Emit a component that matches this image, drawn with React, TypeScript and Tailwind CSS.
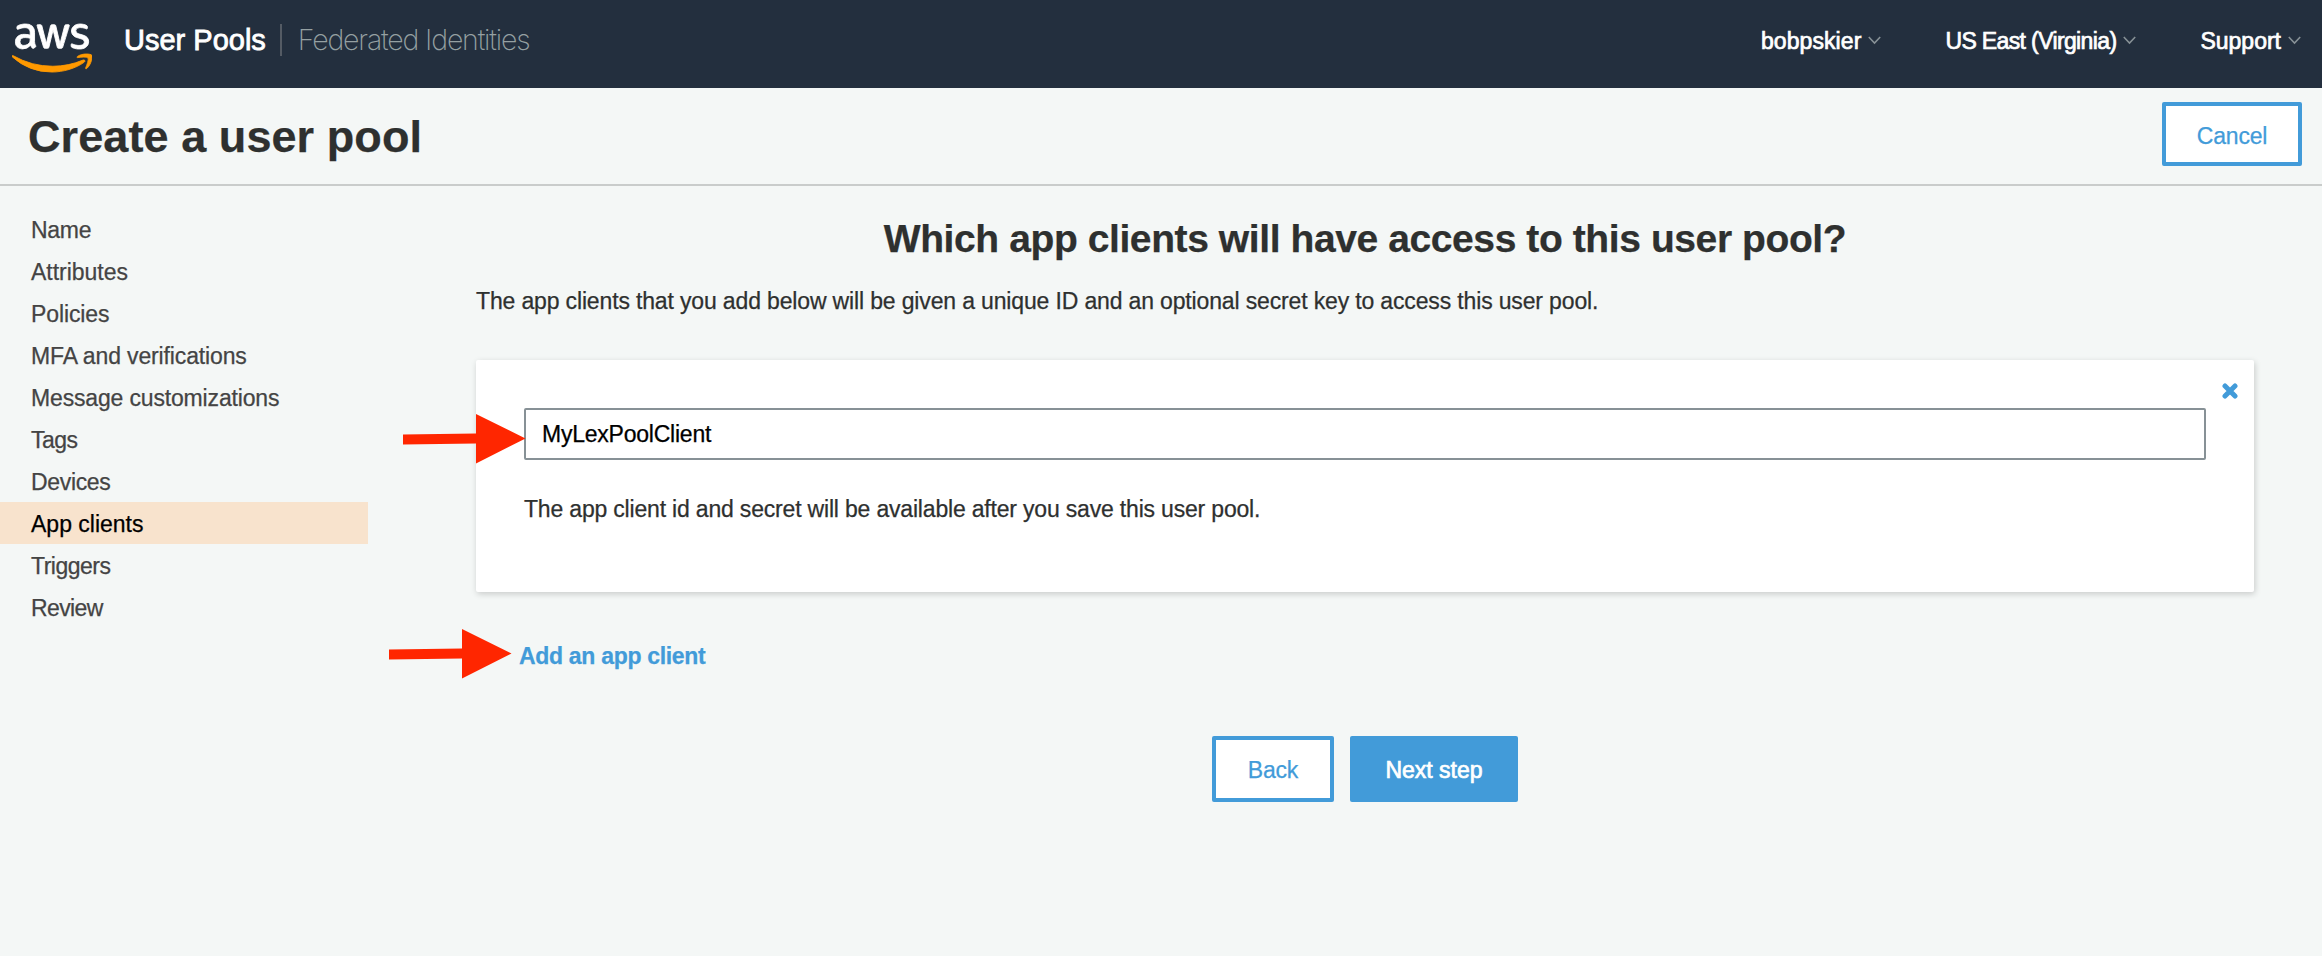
import { FaAws } from "react-icons/fa";

const steps = [
  { label: "Name", tracking: "tracking-[-0.29px]" },
  { label: "Attributes", tracking: "tracking-[-0.02px]" },
  { label: "Policies", tracking: "tracking-[-0.11px]" },
  { label: "MFA and verifications", tracking: "tracking-[-0.14px]" },
  { label: "Message customizations", tracking: "tracking-[-0.16px]" },
  { label: "Tags", tracking: "tracking-[-0.53px]" },
  { label: "Devices", tracking: "tracking-[-0.33px]" },
  { label: "App clients", tracking: "tracking-[0px]", active: true },
  { label: "Triggers", tracking: "tracking-[-0.5px]" },
  { label: "Review", tracking: "tracking-[-0.6px]" },
];

function Chevron() {
  return (
    <svg width="13" height="9" viewBox="0 0 13 9" fill="none" className="shrink-0">
      <path d="M0.800 1l5.700 6 5.700-6" stroke="#879196" strokeWidth="1.600" />
    </svg>
  );
}

function Arrow({ className }: { className: string }) {
  return (
    <svg width="123" height="50" viewBox="0 0 123 50" className={className}>
      <path d="M0 20.500L73 19.500V0L122.500 24.500L73 49.500V29.500L0 30.500Z" fill="#ff2600" />
    </svg>
  );
}

function Logo() {
  return (
    <div className="flex h-16 w-20">
      <svg width="0" height="0">
        <defs>
          <linearGradient id="logo-fill" x1="0" y1="0" x2="0" y2="1">
            <stop offset="0.56" stopColor="#ffffff" />
            <stop offset="0.56" stopColor="#ff9900" />
          </linearGradient>
        </defs>
      </svg>
      <FaAws
        width={80}
        height={64}
        className="h-16 w-20"
        fill="url(#logo-fill)"
        stroke="url(#logo-fill)"
        strokeWidth={7}
      />
    </div>
  );
}

function Header() {
  return (
    <header className="flex h-[88px] items-center bg-[#232f3e] pr-[21px] pb-2 pl-3 text-[23px] text-white">
      <div className="pt-4">
        <Logo />
      </div>
      <div className="flex items-center text-[29px] leading-8">
        <span className="ml-8 [-webkit-text-stroke:0.8px_white]">User Pools</span>
        <span className="ml-[14px] h-8 w-[2px] bg-[#545b64]" />
        <span className="ml-[16px] font-['Inter'] text-[28.5px] font-extralight tracking-[-1.18px] whitespace-nowrap text-[#95a0a2] [-webkit-text-stroke:0px]">
          Federated Identities
        </span>
      </div>
      <nav className="ml-auto flex items-center pt-px leading-8 [-webkit-text-stroke:0.7px_white]">
        <span className="mr-[7px] tracking-[0.08px]">bobpskier</span>
        <Chevron />
        <span className="mr-[7px] ml-[64px] tracking-[-0.63px]">US East (Virginia)</span>
        <Chevron />
        <span className="mr-[7px] ml-[64px]">Support</span>
        <Chevron />
      </nav>
    </header>
  );
}

export default function App() {
  return (
    <div className="flex h-[956px] w-[2322px] flex-col overflow-hidden bg-[#f4f7f6] font-['Liberation_Sans',Arial,sans-serif] text-[23px] text-[#2e302f] [-webkit-text-stroke:0.25px]">
      <Header />
      <div className="flex h-[98px] items-start justify-between border-b-2 border-[#c9cccb] pr-5 pl-7">
        <h1 className="text-[45px] leading-[98px] font-bold tracking-[0.08px]">Create a user pool</h1>
        <button className="mt-[14px] h-16 w-[140px] rounded-[2px] border-4 border-[#429bd9] bg-white pt-[5px] tracking-[-0.2px] text-[#429bd9]">
          Cancel
        </button>
      </div>
      <div className="flex flex-1">
        <aside className="w-[368px] pt-[22px]">
          <ul>
            {steps.map((s) => (
              <li
                key={s.label}
                className={`h-[42px] pt-[2px] pl-[31px] leading-[41px] ${s.tracking} ${
                  s.active ? "bg-[#f8e3cd] text-black" : "text-[#444]"
                }`}
              >
                {s.label}
              </li>
            ))}
          </ul>
        </aside>
        <main className="ml-[108px] w-[1778px] pt-[27px]">
          <h2 className="text-center text-[39px] leading-[52px] font-bold tracking-[-0.406px]">
            Which app clients will have access to this user pool?
          </h2>
          <p className="mt-5 leading-8 tracking-[-0.15px]">
            The app clients that you add below will be given a unique ID and an optional secret key to access this user
            pool.
          </p>
          <section className="relative mt-[43px] h-[232px] rounded-[2px] bg-white px-12 pt-12 shadow-[1px_2px_6px_rgba(0,0,0,0.18)]">
            <svg width="16" height="16" viewBox="0 0 16 16" className="absolute top-[23px] right-[16px]">
              <path d="M3 3l10 10M13 3L3 13" stroke="#429bd9" strokeWidth="5" strokeLinecap="round" />
            </svg>
            <input
              defaultValue="MyLexPoolClient"
              className="block h-[52px] w-full rounded-[2px] border-2 border-[#879196] bg-white pl-4 tracking-[-0.23px] text-black outline-none"
            />
            <p className="mt-[33px] leading-8 tracking-[-0.185px]">
              The app client id and secret will be available after you save this user pool.
            </p>
            <Arrow className="absolute top-[54px] left-[-73px]" />
          </section>
          <div className="relative mt-[48px] pl-[43px] leading-8">
            <a className="font-bold tracking-[-0.31px] text-[#429bd9]">Add an app client</a>
            <Arrow className="absolute top-[-11px] left-[-87px]" />
          </div>
          <div className="mt-[64px] flex justify-center gap-4">
            <button className="h-[66px] w-[122px] rounded-[2px] border-4 border-[#429bd9] bg-white pt-[2px] tracking-[-0.2px] text-[#429bd9]">
              Back
            </button>
            <button className="h-[66px] w-[168px] rounded-[2px] bg-[#429bd9] pt-[2px] text-white [-webkit-text-stroke:0.7px_white]">
              Next step
            </button>
          </div>
        </main>
      </div>
    </div>
  );
}
